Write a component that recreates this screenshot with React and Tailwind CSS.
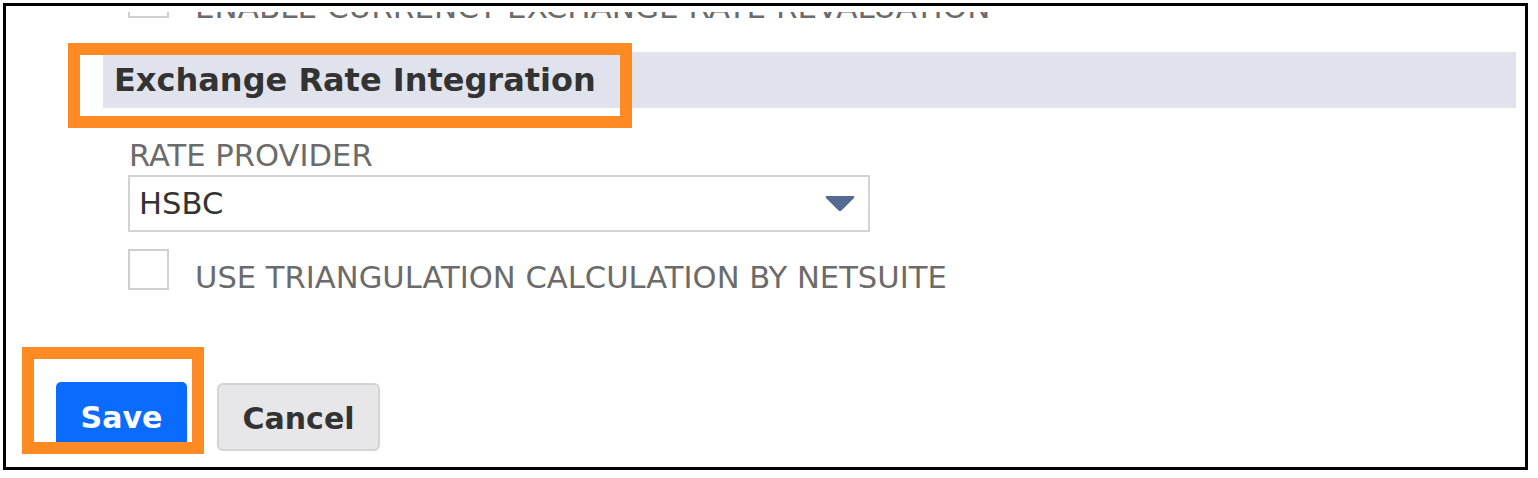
import React from 'react';

const font = "font-['DejaVu_Sans','Verdana',sans-serif]";

const Checkbox = () => (
  <div className="w-[41px] h-[41px] shrink-0 border-2 border-[#cfcfcf] bg-white" />
);

export default function App() {
  return (
    <div className={`relative w-[1538px] h-[478px] bg-white pt-[3px] pl-[3px] ${font}`}>
      {/* screenshot frame */}
      <div className="w-[1525px] h-[467px] border-[3px] border-black flex flex-col">
        {/* previous row, scrolled almost out of view */}
        <div className="h-[12px] shrink-0 flex items-end">
          <div className="h-[6px] w-full overflow-hidden flex items-end pl-[122px]">
            <Checkbox />
            <span className="ml-[26px] mb-[-5px] text-[31px] leading-none text-[#6b6b6b] whitespace-nowrap">
              ENABLE CURRENCY EXCHANGE RATE REVALUATION
            </span>
          </div>
        </div>

        {/* section header */}
        <div className="mt-[34px] ml-[97px] mr-[9px] h-[56px] shrink-0 bg-[#e0e3ec] pl-[11px]">
          <h2 className="text-[32px] leading-[56px] font-bold text-[#333333]">Exchange Rate Integration</h2>
        </div>

        {/* rate provider */}
        <div className="pl-[122px] flex flex-col">
          <label className="mt-[30px] ml-[1px] text-[30.6px] leading-[36px] text-[#6b6b6b]">RATE PROVIDER</label>
          <div className="mt-[1px] w-[742px] h-[57px] border-2 border-[#d3d3d3] flex items-center justify-between pl-[9px] pr-[13px]">
            <span className="text-[30.6px] leading-[36px] text-[#333333]">HSBC</span>
            <svg width="30" height="17" viewBox="0 0 30 17">
              <path d="M2 1 H28 Q30 1 29 3 L16.5 15.5 Q15 17 13.5 15.5 L1 3 Q0 1 2 1 Z" fill="#536b92" />
            </svg>
          </div>

          <div className="mt-[17px] flex items-start">
            <Checkbox />
            <span className="ml-[26px] mt-[11px] text-[30.6px] leading-[36px] text-[#6b6b6b] whitespace-nowrap">
              USE TRIANGULATION CALCULATION BY NETSUITE
            </span>
          </div>
        </div>

        {/* actions */}
        <div className="mt-[86px] ml-[50px] flex items-start gap-[30px]">
          <button className="w-[131px] h-[69px] rounded-[5px] bg-[#0a6cff] text-white text-[30px] font-bold pt-[2px]">
            Save
          </button>
          <button className="mt-[1px] w-[163px] h-[68px] rounded-[6px] border-2 border-[#d4d4d6] bg-[#e7e7e9] text-[#333333] text-[30px] font-bold pt-[2px]">
            Cancel
          </button>
        </div>
      </div>

      {/* annotation highlights */}
      <div className="absolute left-[68px] top-[43px] w-[564px] h-[85px] border-[12px] border-[#fd8a22]" />
      <div className="absolute left-[22px] top-[347px] w-[182px] h-[107px] border-[12px] border-[#fd8a22]" />
    </div>
  );
}
